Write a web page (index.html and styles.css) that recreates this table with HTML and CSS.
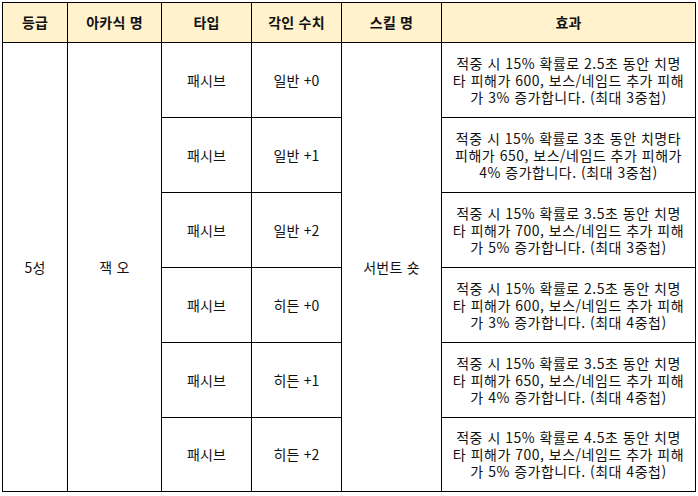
FILE: index.html
```html
<!DOCTYPE html>
<html lang="ko">
<head>
<meta charset="utf-8">
<link rel="stylesheet" href="styles.css">
</head>
<body>
<table class="grid">
  <colgroup>
    <col class="c-grade">
    <col class="c-name">
    <col class="c-type">
    <col class="c-value">
    <col class="c-skill">
    <col class="c-effect">
  </colgroup>
  <thead>
    <tr class="head">
      <th>등급</th>
      <th>아카식 명</th>
      <th>타입</th>
      <th>각인 수치</th>
      <th>스킬 명</th>
      <th>효과</th>
    </tr>
  </thead>
  <tbody>
    <tr>
      <td rowspan="6">5성</td>
      <td rowspan="6">잭 오</td>
      <td>패시브</td>
      <td>일반 +0</td>
      <td rowspan="6">서번트 숏</td>
      <td class="effect">적중 시 15% 확률로 2.5초 동안 치명타 피해가 600, 보스/네임드 추가 피해가 3% 증가합니다. (최대 3중첩)</td>
    </tr>
    <tr>
      <td>패시브</td>
      <td>일반 +1</td>
      <td class="effect">적중 시 15% 확률로 3초 동안 치명타 피해가 650, 보스/네임드 추가 피해가 4% 증가합니다. (최대 3중첩)</td>
    </tr>
    <tr>
      <td>패시브</td>
      <td>일반 +2</td>
      <td class="effect">적중 시 15% 확률로 3.5초 동안 치명타 피해가 700, 보스/네임드 추가 피해가 5% 증가합니다. (최대 3중첩)</td>
    </tr>
    <tr>
      <td>패시브</td>
      <td>히든 +0</td>
      <td class="effect">적중 시 15% 확률로 2.5초 동안 치명타 피해가 600, 보스/네임드 추가 피해가 3% 증가합니다. (최대 4중첩)</td>
    </tr>
    <tr>
      <td>패시브</td>
      <td>히든 +1</td>
      <td class="effect">적중 시 15% 확률로 3.5초 동안 치명타 피해가 650, 보스/네임드 추가 피해가 4% 증가합니다. (최대 4중첩)</td>
    </tr>
    <tr class="last">
      <td>패시브</td>
      <td>히든 +2</td>
      <td class="effect">적중 시 15% 확률로 4.5초 동안 치명타 피해가 700, 보스/네임드 추가 피해가 5% 증가합니다. (최대 4중첩)</td>
    </tr>
  </tbody>
</table>
</body>
</html>
```
FILE: styles.css
```css
html, body {
  margin: 0;
  padding: 0;
  background: #ffffff;
}

body {
  padding: 2px 0 0 2px;
  font-family: "Noto Sans CJK KR", "Noto Sans", sans-serif;
  color: #111111;
}

.grid {
  border-collapse: collapse;
  table-layout: fixed;
  width: 693px;
  font-size: 14px;
  line-height: 17px;
  letter-spacing: 0.2px;
}

.c-grade { width: 65px; }
.c-name { width: 94px; }
.c-type { width: 90px; }
.c-value { width: 90px; }
.c-skill { width: 100px; }
.c-effect { width: 254px; }

.grid th,
.grid td {
  border: 1px solid #000000;
  text-align: center;
  vertical-align: middle;
  padding: 0 8px;
}

.head th {
  height: 39px;
  background: #fff2cc;
  font-weight: 700;
  font-size: 14px;
}

.grid tbody tr {
  height: 75px;
}

.grid tbody tr.last {
  height: 74px;
}

.grid td.effect {
  padding: 0 9px;
  letter-spacing: 0.5px;
}
```
